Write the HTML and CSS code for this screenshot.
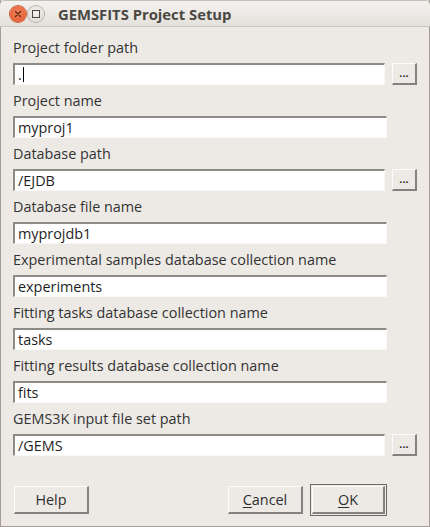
FILE: index.html
```
<!DOCTYPE html>
<html>
<head>
<meta charset="utf-8">
<link rel="stylesheet" href="styles.css">
</head>
<body>
<div class="window">
  <div class="titlebar">
    <div class="wbtns">
      <span class="wbtn close"><svg width="16" height="16" viewBox="0 0 16 16"><path d="M5.5 5.5 L10.5 10.5 M10.5 5.5 L5.5 10.5" stroke="#5a2a14" stroke-width="1.3" stroke-linecap="round"/></svg></span>
      <span class="wbtn max"><svg width="16" height="16" viewBox="0 0 16 16"><rect x="4.5" y="4.5" width="7" height="7" fill="none" stroke="#4a4843" stroke-width="1"/></svg></span>
    </div>
    <div class="title">GEMSFITS Project Setup</div>
  </div>
  <div class="content">
    <div class="row">
      <div class="label">Project folder path</div>
      <div class="field-line"><div class="input">.<span class="caret"></span></div><div class="browse">...</div></div>
    </div>
    <div class="row">
      <div class="label">Project name</div>
      <div class="field-line"><div class="input">myproj1</div></div>
    </div>
    <div class="row">
      <div class="label">Database path</div>
      <div class="field-line"><div class="input">/EJDB</div><div class="browse">...</div></div>
    </div>
    <div class="row">
      <div class="label">Database file name</div>
      <div class="field-line"><div class="input">myprojdb1</div></div>
    </div>
    <div class="row">
      <div class="label">Experimental samples database collection name</div>
      <div class="field-line"><div class="input">experiments</div></div>
    </div>
    <div class="row">
      <div class="label">Fitting tasks database collection name</div>
      <div class="field-line"><div class="input">tasks</div></div>
    </div>
    <div class="row">
      <div class="label">Fitting results database collection name</div>
      <div class="field-line"><div class="input">fits</div></div>
    </div>
    <div class="row">
      <div class="label">GEMS3K input file set path</div>
      <div class="field-line"><div class="input">/GEMS</div><div class="browse">...</div></div>
    </div>
    <div class="buttons">
      <div class="btn help">Help</div>
      <div class="spacer"></div>
      <div class="btn cancel"><u>C</u>ancel</div>
      <div class="default-frame"><div class="btn ok"><u>O</u>K</div></div>
    </div>
  </div>
</div>
</body>
</html>
```
FILE: styles.css
```
html, body {
  margin: 0;
  padding: 0;
  background: #edeae6;
}
body {
  font-family: "Open Sans", "DejaVu Sans", sans-serif;
  font-size: 14.4px;
  color: #333;
}
.window {
  width: 430px;
  height: 527px;
  box-sizing: border-box;
  border: 1px solid #a39d96;
  border-top: none;
  background: #edeae6;
  display: flex;
  flex-direction: column;
}
.titlebar {
  height: 27px;
  box-sizing: border-box;
  margin: 0 -1px;
  background: linear-gradient(#f4f2ef, #e4e1dc);
  border-bottom: 1px solid #cbc6bf;
  border-top: 1px solid #c5bfb7;
  border-radius: 5px 5px 0 0;
  display: flex;
  align-items: center;
}
.wbtns {
  display: flex;
  gap: 2px;
  margin-left: 10px;
}
.wbtn {
  width: 16px;
  height: 16px;
  border-radius: 50%;
  display: block;
}
.wbtn svg { display: block; }
.close {
  background: radial-gradient(circle at 50% 40%, #f6845a, #e0532a);
  box-shadow: 0 0 0 1px #c9582f;
}
.max {
  background: radial-gradient(circle at 50% 40%, #f4f2ef, #d8d5cf);
  box-shadow: 0 0 0 1px #b4afa8;
}
.title {
  margin-left: 14px;
  font-weight: bold;
  font-size: 14.8px;
  color: #4b4742;
}
.content {
  padding: 5px 12px 0 12px;
  display: flex;
  flex-direction: column;
  flex: 1;
}
.row {
  display: flex;
  flex-direction: column;
}
.label {
  height: 31px;
  line-height: 20px;
  box-sizing: border-box;
  padding-top: 6px;
  color: #333;
}
.field-line {
  display: flex;
  align-items: center;
  height: 22px;
}
.input {
  width: 374px;
  height: 22px;
  box-sizing: border-box;
  background: #fff;
  border-top: 2px solid #8e8a86;
  border-left: 2px solid #8e8a86;
  border-right: 1px solid #f9f8f7;
  border-bottom: 1px solid #f9f8f7;
  padding-left: 3px;
  line-height: 19px;
  color: #1e1e1e;
  position: relative;
  display: flex;
  align-items: center;
}
.caret {
  display: inline-block;
  width: 1px;
  height: 15px;
  background: #000;
  margin-left: 1px;
}
.browse {
  margin-left: 7px;
  width: 25px;
  height: 22px;
  box-sizing: border-box;
  border-top: 1px solid #fcfbfa;
  border-left: 1px solid #fcfbfa;
  border-right: 2px solid #858180;
  border-bottom: 2px solid #858180;
  font-size: 11px;
  line-height: 14px;
  padding-top: 2px;
  text-align: center;
  color: #2e2e2e;
  font-weight: bold;
}
.buttons {
  display: flex;
  align-items: center;
  margin-top: 28px;
  padding-left: 1px;
}
.spacer { flex: 1; }
.btn {
  height: 28px;
  box-sizing: border-box;
  border-top: 1px solid #fcfbfa;
  border-left: 1px solid #fcfbfa;
  border-right: 2px solid #858180;
  border-bottom: 2px solid #858180;
  display: flex;
  align-items: center;
  justify-content: center;
  color: #2e2e2e;
}
.btn u {
  text-decoration-thickness: 1px;
  text-underline-offset: 2px;
}
.help { width: 75px; }
.cancel { width: 75px; }
.default-frame {
  margin-left: 7px;
  margin-right: 30px;
  border: 1px solid #6e6a66;
  padding: 1px;
}
.ok { width: 73px; }
```
